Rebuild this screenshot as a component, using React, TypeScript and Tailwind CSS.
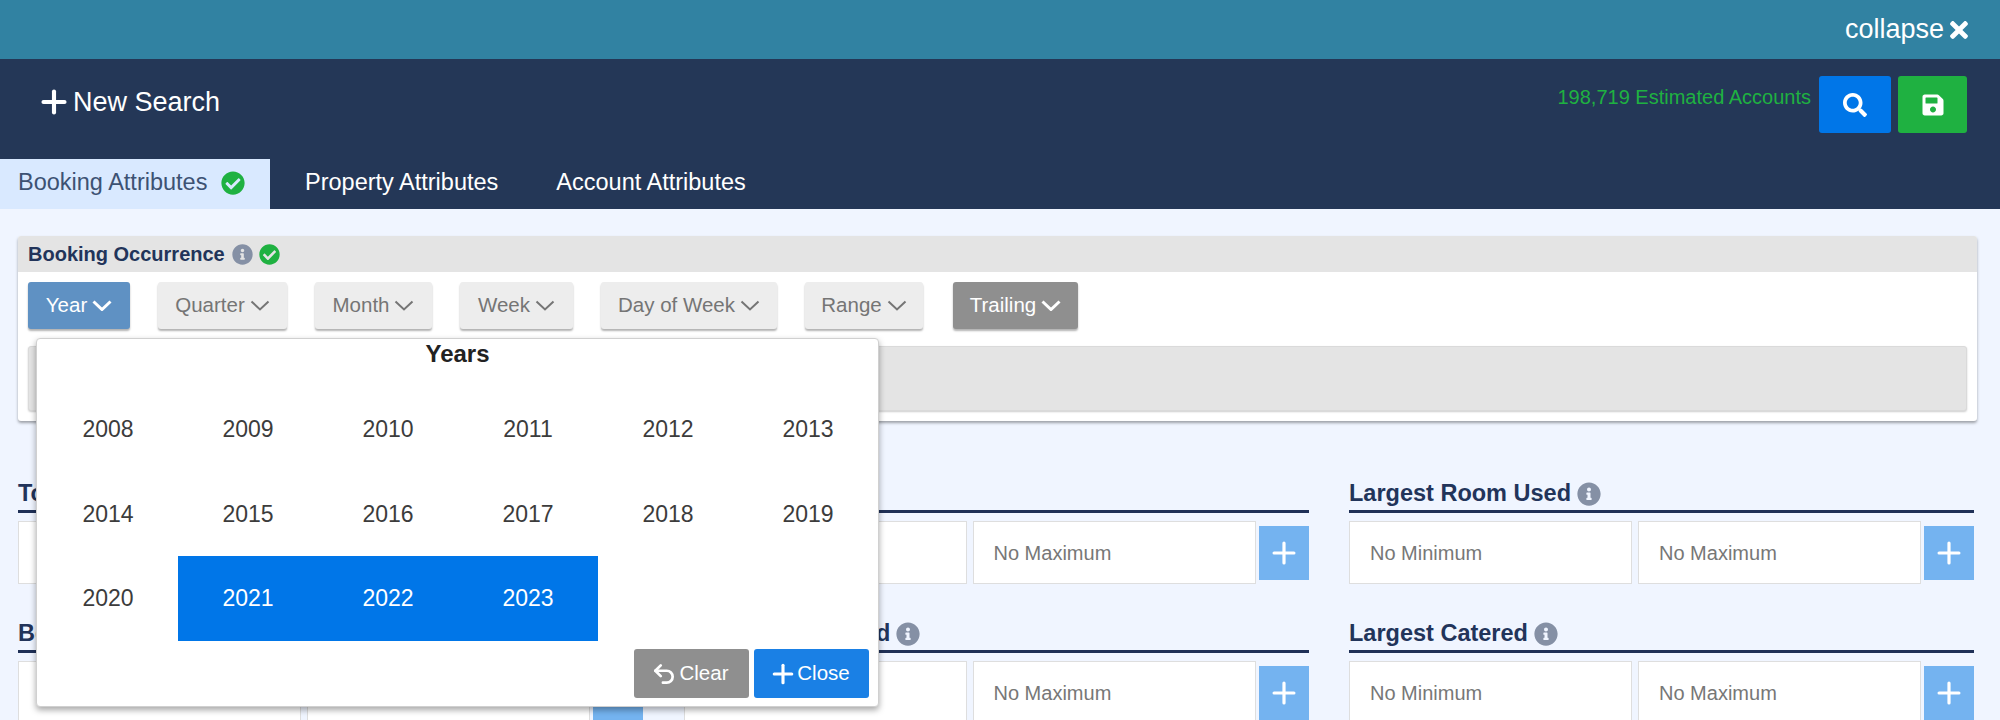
import { Plus, Undo2 } from 'lucide-react';
import { FaCheckCircle, FaInfoCircle, FaSave, FaSearch, FaTimes } from 'react-icons/fa';

const years = Array.from({ length: 16 }, (_, i) => 2008 + i);
const selected = [2021, 2022, 2023];
const filters = [
  { label: 'Quarter', w: 'w-[129px]' },
  { label: 'Month', w: 'w-[117px]' },
  { label: 'Week', w: 'w-[113px]' },
  { label: 'Day of Week', w: 'w-[176px]' },
  { label: 'Range', w: 'w-[118px]' },
];

function Chevron({ heavy }: { heavy?: boolean }) {
  return (
    <svg viewBox="0 0 20 11" className="h-[11px] w-[20px]" fill="none" stroke="currentColor" strokeWidth={heavy ? 3 : 2}>
      <path d="M1.5 1.5 L10 9.5 L18.5 1.5" />
    </svg>
  );
}

function FilterButton({ label, w }: { label: string; w: string }) {
  return (
    <button className={`${w} flex h-[47px] items-center justify-center gap-[5px] rounded-[3px] bg-[#ededed] text-[20.5px] text-[#757575] shadow-[0_2px_2px_rgba(0,0,0,0.3)]`}>
      {label}
      <Chevron />
    </button>
  );
}

function RangeField({ title }: { title: string }) {
  return (
    <div>
      <div className="flex h-[30px] items-center gap-[6px] text-[23.5px] font-bold text-[#22345a]">
        {title}
        <FaInfoCircle className="h-[24px] w-[24px] text-[#8590a5]" />
      </div>
      <div className="mt-[1px] h-[3px] bg-[#1f3057]" />
      <div className="mt-[8px] flex items-center">
        <div className="flex h-[63px] w-[283px] items-center border border-[#dedede] bg-white pl-5 text-[20px] text-[#777]">No Minimum</div>
        <div className="ml-[6px] flex h-[63px] w-[283px] items-center border border-[#dedede] bg-white pl-5 text-[20px] text-[#777]">No Maximum</div>
        <div className="ml-[3px] flex h-[54px] w-[50px] items-center justify-center bg-[#74b3f0] text-white">
          <Plus className="h-[34px] w-[34px]" strokeWidth={2.25} />
        </div>
      </div>
    </div>
  );
}

export default function App() {
  return (
    <div className="relative h-[720px] w-[2000px] overflow-hidden bg-[#f0f5ff] font-['Liberation_Sans',Arial,sans-serif]">
      <div className="flex h-[59px] items-center justify-end gap-[2px] bg-[#3182a2] pr-[28px] text-[27px] text-white">
        collapse
        <FaTimes className="h-[26px] w-[26px]" />
      </div>

      <div className="h-[150px] bg-[#243757]">
        <div className="flex h-[100px] justify-between">
          <div className="flex items-center gap-[8px] pb-[14px] pl-[36px] text-[27px] text-white">
            <Plus className="h-[36px] w-[36px]" strokeWidth={2.75} />
            <span className="-ml-[7px]">New Search</span>
          </div>
          <div className="flex items-start pt-[17px] pr-[33px]">
            <span className="mt-[6px] mr-2 text-[20px] text-[#1fb141]">198,719 Estimated Accounts</span>
            <button className="flex h-[57px] w-[72px] items-center justify-center rounded-[3px] bg-[#0076e8] text-white">
              <FaSearch className="h-[24px] w-[24px]" />
            </button>
            <button className="ml-[7px] flex h-[57px] w-[69px] items-center justify-center rounded-[3px] bg-[#1fb141] text-white">
              <FaSave className="h-[24px] w-[24px]" />
            </button>
          </div>
        </div>
        <div className="flex h-[50px] items-stretch text-[23.5px] text-white">
          <div className="flex w-[270px] items-center gap-[14px] bg-[#d9e9ff] pb-[2px] pl-[18px] text-[#3d5273]">
            Booking Attributes
            <FaCheckCircle className="h-6 w-6 text-[#1fb141]" />
          </div>
          <div className="flex items-center pb-[2px] pl-[35px]">Property Attributes</div>
          <div className="flex items-center pb-[2px] pl-[58px]">Account Attributes</div>
        </div>
      </div>

      <div className="px-[18px] pt-[27px] pr-[23px]">
        <div className="rounded-[3px] bg-white shadow-[0_2px_3px_rgba(0,0,0,0.35)]">
          <div className="flex h-[36px] items-center gap-[6px] rounded-t-[3px] bg-[#e4e4e4] pl-[10px] text-[20px] font-bold text-[#22345a]">
            Booking Occurrence
            <FaInfoCircle className="ml-[1px] h-[21px] w-[21px] text-[#8590a5]" />
            <FaCheckCircle className="h-[21px] w-[21px] text-[#1fb141]" />
          </div>
          <div className="flex gap-[28px] px-[10px] pt-[10px]">
            <button className="flex h-[47px] w-[102px] items-center justify-center gap-[5px] rounded-[3px] bg-[#5f91c3] text-[20.5px] text-white shadow-[0_2px_2px_rgba(0,0,0,0.3)]">
              Year
              <Chevron heavy />
            </button>
            {filters.map((f) => (
              <FilterButton key={f.label} label={f.label} w={f.w} />
            ))}
            <button className="ml-[2px] flex h-[47px] w-[125px] items-center justify-center gap-[5px] rounded-[3px] bg-[#8f8f8f] text-[20.5px] text-white shadow-[0_2px_2px_rgba(0,0,0,0.3)]">
              Trailing
              <Chevron heavy />
            </button>
          </div>
          <div className="mx-[10px] mt-[17px] h-[65px] rounded-[3px] border border-[#dadada] bg-[#e4e4e4] shadow-[0_1px_2px_rgba(0,0,0,0.2)]" />
          <div className="h-[10px]" />
        </div>

        <div className="mt-[58px] grid grid-cols-[625px_625px_625px] gap-x-[40.5px] gap-y-[35px]">
          <RangeField title="Total Rooms" />
          <RangeField title="Peak Rooms" />
          <RangeField title="Largest Room Used" />
          <RangeField title="Booked Space" />
          <RangeField title="Largest Area Used" />
          <RangeField title="Largest Catered" />
        </div>
      </div>

      {/* year picker sits over the page */}
      <div className="absolute top-[338px] left-[36px] h-[369px] w-[843px] rounded-[4px] border border-[#d0d0d0] bg-white shadow-[0_3px_6px_rgba(0,0,0,0.35)]">
        <div className="pt-[3px] text-center text-[24px] leading-6 font-bold text-[#222]">Years</div>
        <div className="mt-[21px] grid grid-cols-[140px_140px_140px_140px_140px_140px] pl-[1px]">
          {years.map((y) => (
            <div
              key={y}
              className={`flex h-[84.5px] items-center justify-center text-[23px] ${selected.includes(y) ? 'bg-[#0076e8] text-white' : 'text-[#3c3c3c]'}`}
            >
              {y}
            </div>
          ))}
        </div>
        <div className="absolute right-[9px] bottom-[8px] flex gap-[5px]">
          <button className="flex h-[49px] w-[115px] items-center justify-center gap-[3px] rounded-[3px] bg-[#8f8f8f] text-[20.5px] text-white">
            <Undo2 className="-ml-[4px] h-[26px] w-[26px]" strokeWidth={2.5} />
            Clear
          </button>
          <button className="flex h-[49px] w-[115px] items-center justify-center gap-[4px] rounded-[3px] bg-[#1a80e5] text-[20.5px] text-white">
            <Plus className="-mx-[5px] h-[30px] w-[30px]" strokeWidth={2.5} />
            Close
          </button>
        </div>
      </div>
    </div>
  );
}
